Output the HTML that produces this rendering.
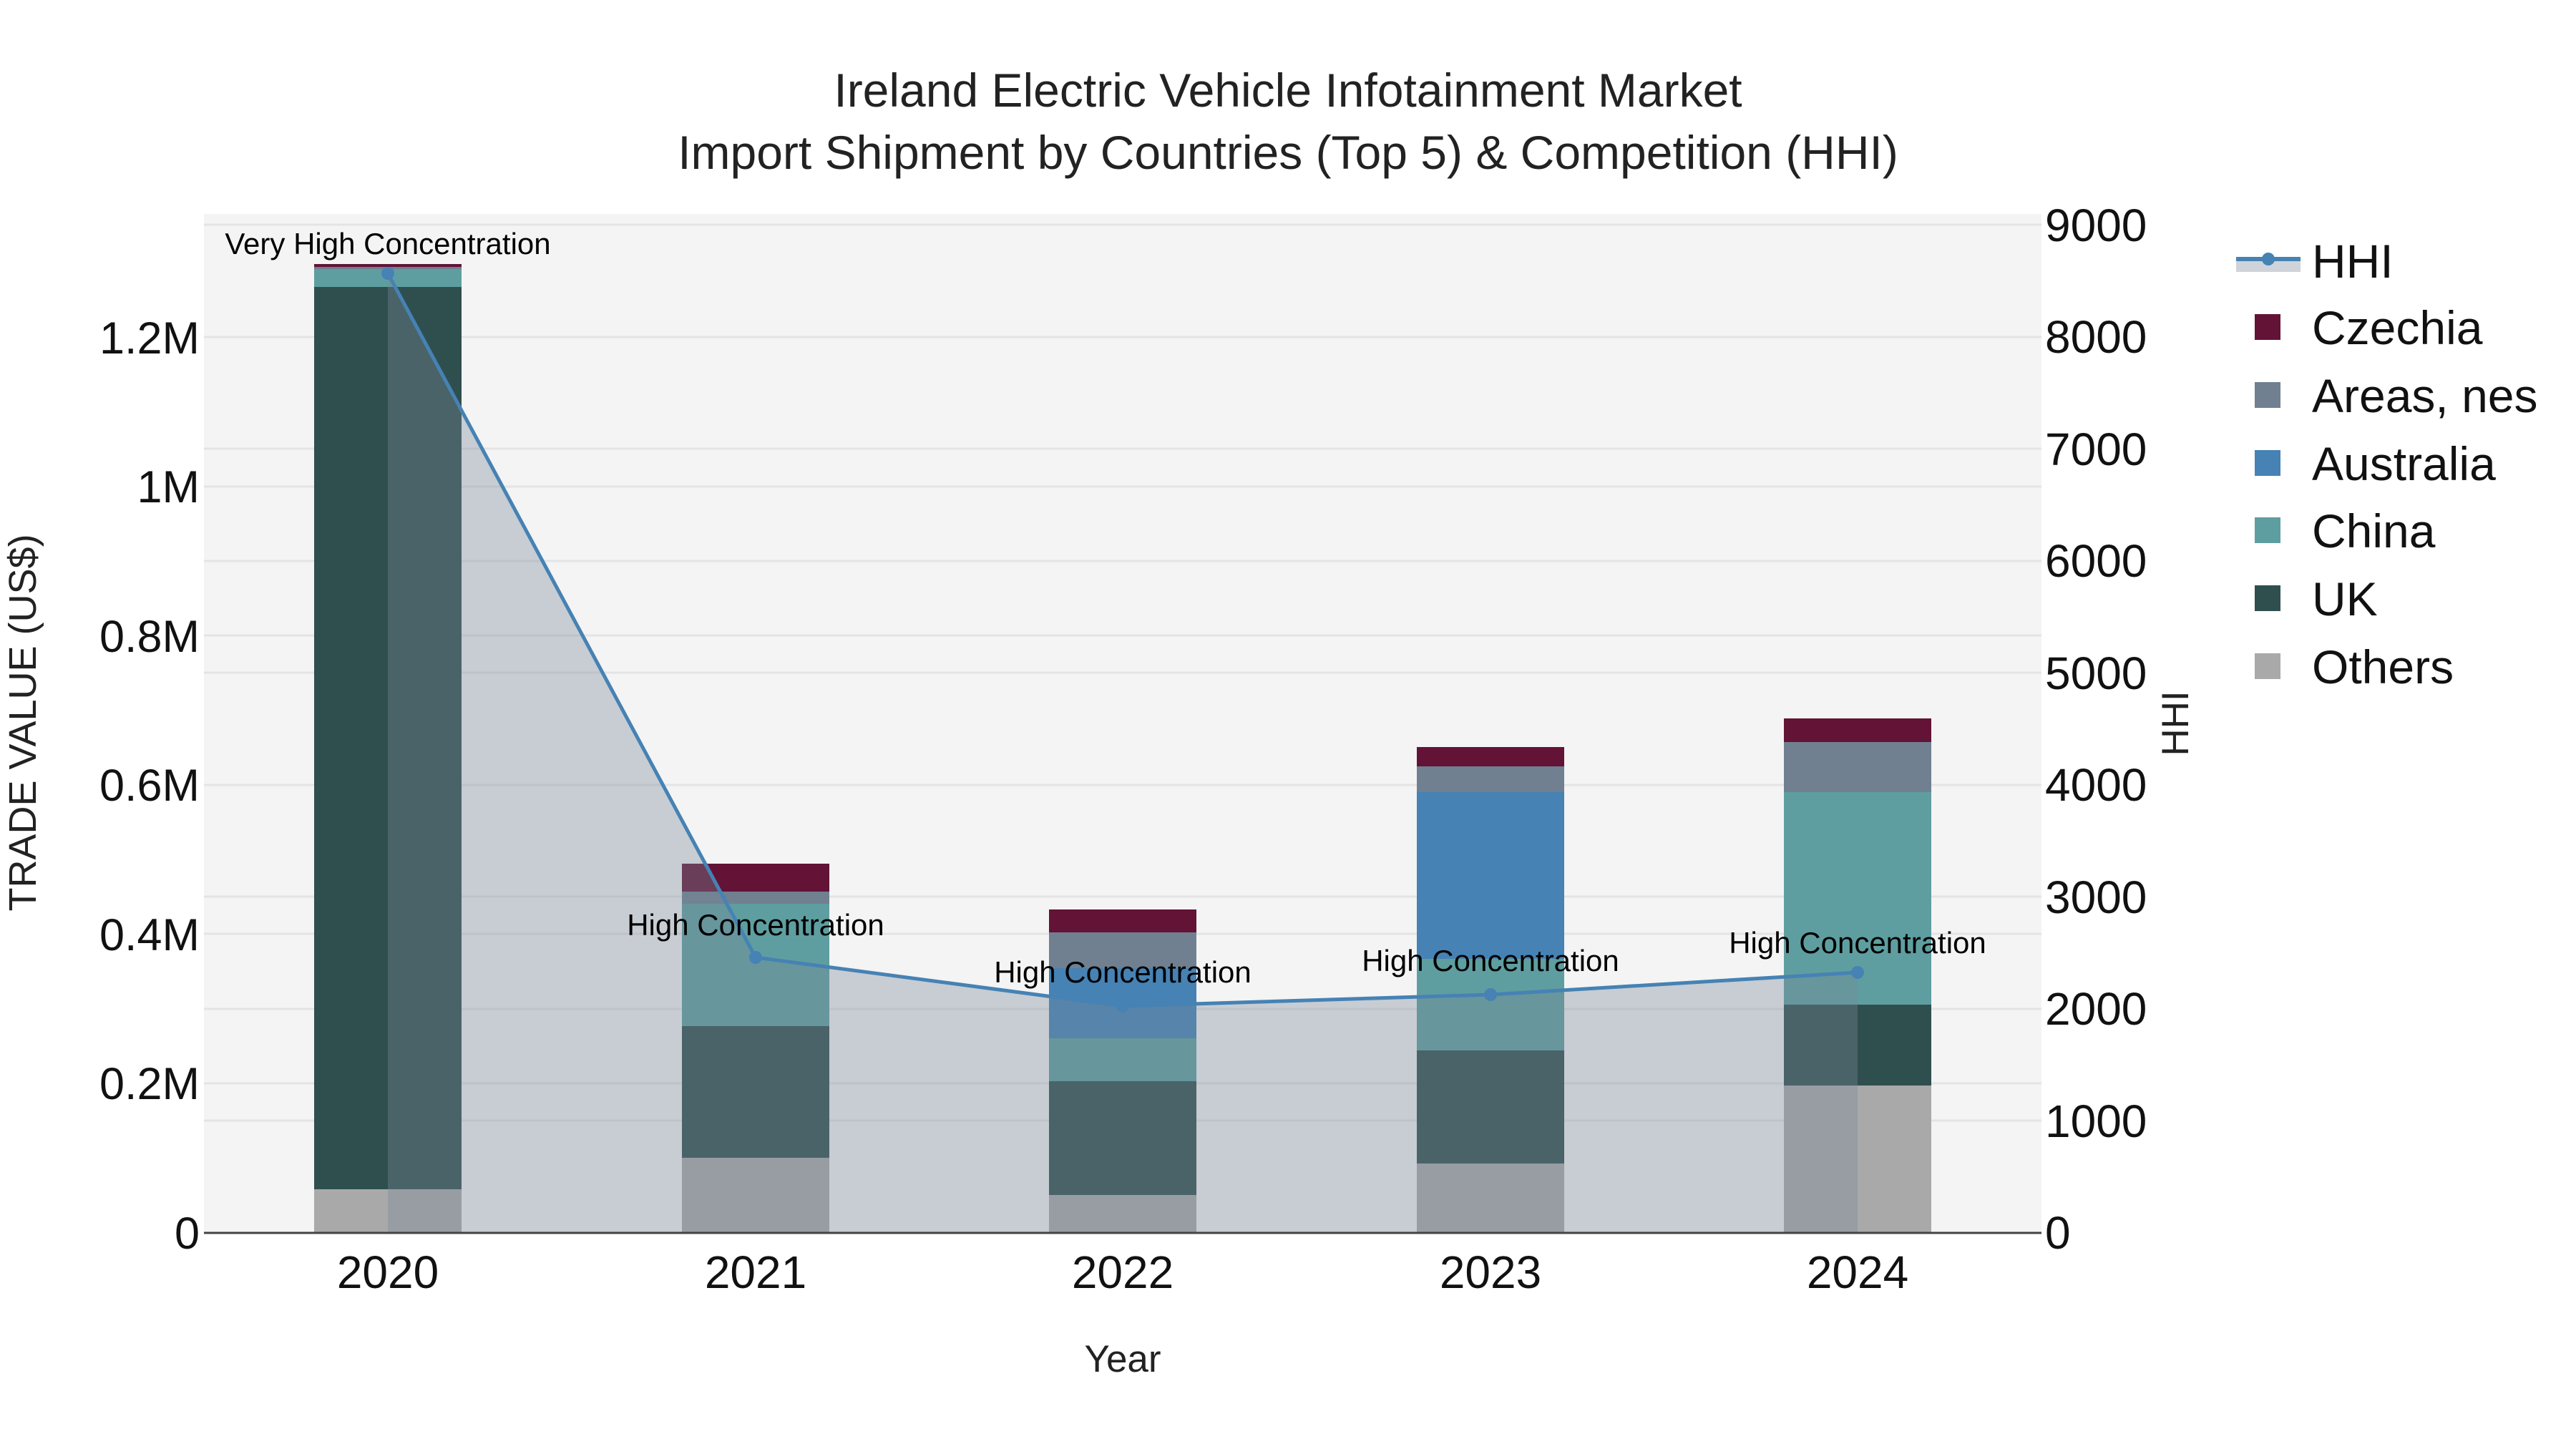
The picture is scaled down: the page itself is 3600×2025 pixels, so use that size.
<!DOCTYPE html>
<html><head><meta charset="utf-8"><style>html,body{margin:0;padding:0;background:#fff}svg{display:block}</style></head>
<body>
<svg width="3600" height="2025" viewBox="0 0 3600 2025" xmlns="http://www.w3.org/2000/svg" font-family="Liberation Sans, Arial, sans-serif">
<rect width="3600" height="2025" fill="#fff"/>
<rect x="285" y="299" width="2568" height="1424" fill="#f4f4f4"/>
<g stroke="#e4e4e4" stroke-width="3">
<line x1="285" x2="2853" y1="1514" y2="1514"/><line x1="285" x2="2853" y1="1305" y2="1305"/><line x1="285" x2="2853" y1="1097" y2="1097"/><line x1="285" x2="2853" y1="888" y2="888"/><line x1="285" x2="2853" y1="680" y2="680"/><line x1="285" x2="2853" y1="471" y2="471"/>
<line x1="285" x2="2853" y1="1566" y2="1566"/><line x1="285" x2="2853" y1="1410" y2="1410"/><line x1="285" x2="2853" y1="1253" y2="1253"/><line x1="285" x2="2853" y1="1097" y2="1097"/><line x1="285" x2="2853" y1="940" y2="940"/><line x1="285" x2="2853" y1="784" y2="784"/><line x1="285" x2="2853" y1="627" y2="627"/><line x1="285" x2="2853" y1="471" y2="471"/><line x1="285" x2="2853" y1="314" y2="314"/>
</g>
<g>
<rect x="439" y="1662" width="206" height="61" fill="#a9a9a9"/>
<rect x="439" y="401" width="206" height="1261" fill="#2f4f4f"/>
<rect x="439" y="376" width="206" height="25" fill="#5f9ea0"/>
<rect x="439" y="373" width="206" height="3" fill="#708090"/>
<rect x="439" y="369" width="206" height="4" fill="#631336"/>

<rect x="953" y="1618" width="206" height="105" fill="#a9a9a9"/>
<rect x="953" y="1434" width="206" height="184" fill="#2f4f4f"/>
<rect x="953" y="1263" width="206" height="171" fill="#5f9ea0"/>
<rect x="953" y="1246" width="206" height="17" fill="#708090"/>
<rect x="953" y="1207" width="206" height="39" fill="#631336"/>

<rect x="1466" y="1670" width="206" height="53" fill="#a9a9a9"/>
<rect x="1466" y="1511" width="206" height="159" fill="#2f4f4f"/>
<rect x="1466" y="1451" width="206" height="60" fill="#5f9ea0"/>
<rect x="1466" y="1353" width="206" height="98" fill="#4682b4"/>
<rect x="1466" y="1303" width="206" height="50" fill="#708090"/>
<rect x="1466" y="1271" width="206" height="32" fill="#631336"/>

<rect x="1980" y="1626" width="206" height="97" fill="#a9a9a9"/>
<rect x="1980" y="1468" width="206" height="158" fill="#2f4f4f"/>
<rect x="1980" y="1340" width="206" height="128" fill="#5f9ea0"/>
<rect x="1980" y="1107" width="206" height="233" fill="#4682b4"/>
<rect x="1980" y="1071" width="206" height="36" fill="#708090"/>
<rect x="1980" y="1044" width="206" height="27" fill="#631336"/>

<rect x="2493" y="1517" width="206" height="206" fill="#a9a9a9"/>
<rect x="2493" y="1404" width="206" height="113" fill="#2f4f4f"/>
<rect x="2493" y="1107" width="206" height="297" fill="#5f9ea0"/>
<rect x="2493" y="1037" width="206" height="70" fill="#708090"/>
<rect x="2493" y="1004" width="206" height="33" fill="#631336"/>
</g>
<polygon points="542,382 1056,1338 1569,1406 2083,1390 2596,1359 2596,1723 542,1723" fill="#778899" fill-opacity="0.36"/>
<line x1="285" x2="2853" y1="1723" y2="1723" stroke="#444" stroke-width="3"/>
<polyline points="542,382 1056,1338 1569,1406 2083,1390 2596,1359" fill="none" stroke="#4682b4" stroke-width="5"/>
<g fill="#4682b4"><circle cx="542" cy="382" r="9"/><circle cx="1056" cy="1338" r="9"/><circle cx="1569" cy="1406" r="9"/><circle cx="2083" cy="1390" r="9"/><circle cx="2596" cy="1359" r="9"/></g>
<g font-size="42" text-anchor="middle" fill="#000">
<text x="542" y="355">Very High Concentration</text>
<text x="1056" y="1307">High Concentration</text>
<text x="1569" y="1373">High Concentration</text>
<text x="2083" y="1357">High Concentration</text>
<text x="2596" y="1332">High Concentration</text>
</g>
<g font-size="63" text-anchor="end" fill="#111">
<text x="279" y="1745">0</text>
<text x="279" y="1536">0.2M</text>
<text x="279" y="1328">0.4M</text>
<text x="279" y="1119">0.6M</text>
<text x="279" y="911">0.8M</text>
<text x="279" y="702">1M</text>
<text x="279" y="494">1.2M</text>
</g>
<g font-size="64" text-anchor="start" fill="#111">
<text x="2858" y="1745">0</text>
<text x="2858" y="1589">1000</text>
<text x="2858" y="1432">2000</text>
<text x="2858" y="1276">3000</text>
<text x="2858" y="1119">4000</text>
<text x="2858" y="963">5000</text>
<text x="2858" y="806">6000</text>
<text x="2858" y="650">7000</text>
<text x="2858" y="493">8000</text>
<text x="2858" y="337">9000</text>
</g>
<g font-size="64" text-anchor="middle" fill="#111">
<text x="542" y="1800">2020</text>
<text x="1056" y="1800">2021</text>
<text x="1569" y="1800">2022</text>
<text x="2083" y="1800">2023</text>
<text x="2596" y="1800">2024</text>
</g>
<text x="1569" y="1917" font-size="53" text-anchor="middle" fill="#222">Year</text>
<text transform="translate(50,1010) rotate(-90)" font-size="54" text-anchor="middle" fill="#222">TRADE VALUE (US$)</text>
<text transform="translate(3058,1011) rotate(-90)" font-size="53" text-anchor="middle" fill="#222">HHI</text>
<g font-size="66" text-anchor="middle" fill="#222">
<text x="1800" y="149">Ireland Electric Vehicle Infotainment Market</text>
<text x="1800" y="236">Import Shipment by Countries (Top 5) &amp; Competition (HHI)</text>
</g>
<rect x="3125" y="362" width="90" height="18" fill="#778899" fill-opacity="0.36"/>
<line x1="3125" x2="3215" y1="362" y2="362" stroke="#4682b4" stroke-width="6"/>
<circle cx="3170" cy="362" r="9" fill="#4682b4"/>
<rect x="3151" y="439" width="36" height="36" fill="#631336"/>
<rect x="3151" y="534" width="36" height="36" fill="#708090"/>
<rect x="3151" y="629" width="36" height="36" fill="#4682b4"/>
<rect x="3151" y="723" width="36" height="36" fill="#5f9ea0"/>
<rect x="3151" y="818" width="36" height="36" fill="#2f4f4f"/>
<rect x="3151" y="913" width="36" height="36" fill="#a9a9a9"/>
<g font-size="66" fill="#111">
<text x="3231" y="388">HHI</text>
<text x="3231" y="481">Czechia</text>
<text x="3231" y="576">Areas, nes</text>
<text x="3231" y="671">Australia</text>
<text x="3231" y="765">China</text>
<text x="3231" y="860">UK</text>
<text x="3231" y="955">Others</text>
</g>
</svg>
</body></html>
